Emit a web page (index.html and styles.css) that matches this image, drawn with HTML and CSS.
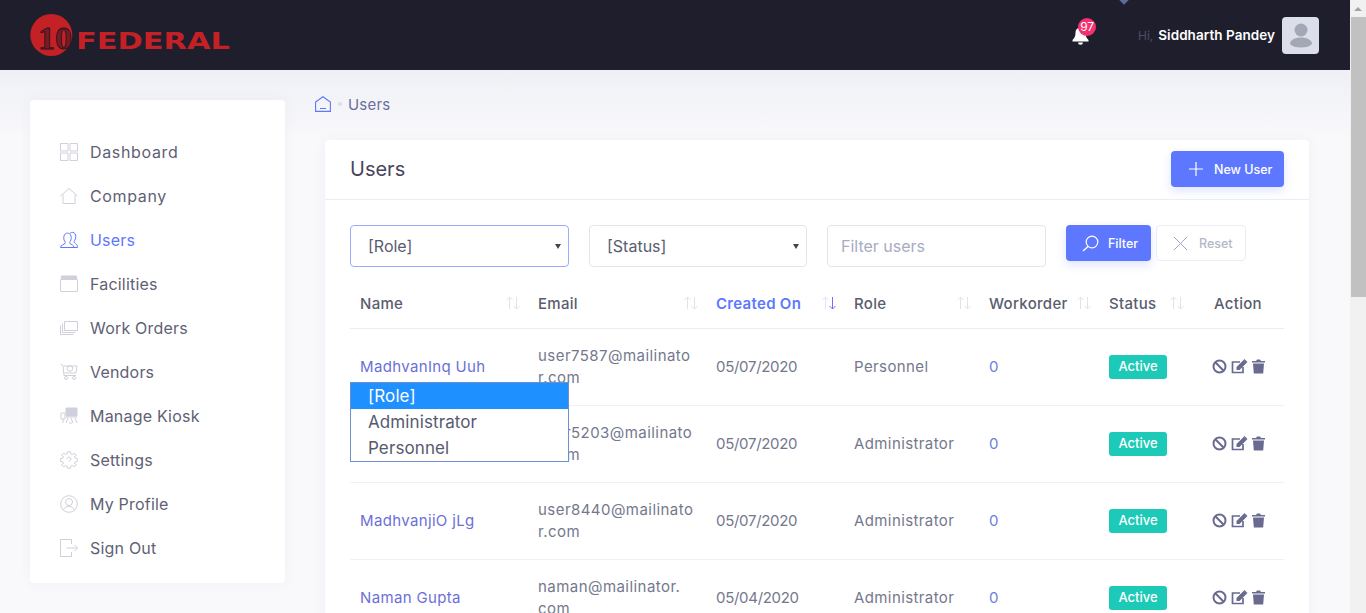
FILE: index.html
```html
<!DOCTYPE html>
<html lang="en">
<head>
    <meta charset="UTF-8">
    <title>Users</title>
    <link rel="stylesheet" href="styles.css">
</head>
<body>
    <header class="topbar">
        <svg class="logo" width="210" height="46" viewBox="0 0 210 46">
            <circle cx="21.3" cy="23" r="21" fill="#c42126"/>
            <text class="logo-num" x="8" y="37" textLength="34" lengthAdjust="spacingAndGlyphs">10</text>
            <text class="logo-name" x="46" y="37" textLength="154" lengthAdjust="spacingAndGlyphs">FEDERAL</text>
        </svg>
        <span class="top-marker"></span>
        <div class="notify">
            <svg width="17" height="18" viewBox="0 0 17 18"><path fill="#fff" d="M8.5.5c-3 0-5 2.400-5 5.300 0 3.500-1 5.200-3 7.200v1.500h16V13c-2-2-3-3.700-3-7.200 0-2.900-2-5.300-5-5.300zM6 15.500a2.500 2.200 0 0 0 5 0z"/></svg>
            <span class="badge">97</span>
        </div>
        <div class="user-info">
            <span class="hi">Hi,</span>
            <span class="uname">Siddharth Pandey</span>
            <span class="avatar">
                <svg width="24" height="26" viewBox="0 0 24 26"><circle cx="12" cy="8" r="6.5" fill="#a4a7b5"/><path fill="#a4a7b5" d="M1 22c0-4 5-6.500 11-6.500s11 2.500 11 6.500c-2 2.500-6 3.500-11 3.500s-9-1-11-3.500z"/></svg>
            </span>
        </div>
    </header>

    <div class="layout">
        <aside class="sidebar">
            <a class="nav-item wide"><svg width="18" height="18" viewBox="0 0 18 18"><path d="M.5.5H8V8H.5zM10 .5h7.500V8H10zM.5 10H8v7.500H.5zM10 10h7.500v7.500H10z"/></svg>Dashboard</a>
            <a class="nav-item wide"><svg width="18" height="18" viewBox="0 0 18 18"><path d="M.5 9 9 1.500 17.500 9M3 7.500v9h12v-9"/></svg>Company</a>
            <a class="nav-item active"><svg width="18" height="18" viewBox="0 0 18 18"><path d="M.5 16.500c0-2.500 3.500-3 4.500-4 .5-.8.300-1.500-.3-2.300C3.800 9 3.500 6.800 4 5c.5-2 1.800-2.800 3.500-2.800S10.500 3 11 5c.4 1.800.2 4-.7 5.200-.6.800-.8 1.500-.3 2.300 1 1 4 1.500 4 4zM10 2.500c.8-1 1.800-1.200 2.800-1.100 2 .2 3 2 3 4.100 0 1.700-.5 3.200-1.300 4.200-.5.700-.5 1.400 0 2 .7.800 3 1.200 3 4.800h-3.500"/></svg>Users</a>
            <a class="nav-item"><svg width="18" height="18" viewBox="0 0 18 18"><path d="M.5 4.500h17v12H.5z"/><path class="fill" d="M1.500 1h15v2.500h-15z"/></svg>Facilities</a>
            <a class="nav-item"><svg width="18" height="18" viewBox="0 0 18 18"><path d="M4.500 2.500h13v9h-13zM2.500 4.500v9h13M.5 6.500v9h13"/></svg>Work Orders</a>
            <a class="nav-item"><svg width="18" height="18" viewBox="0 0 18 18"><path d="M.5 1 3 2.500l1 10h12M4 3h13l-1 7H4.500"/><circle cx="10" cy="5.500" r="2.800"/><circle cx="6" cy="15" r="1.500"/><circle cx="14" cy="15" r="1.500"/></svg>Vendors</a>
            <a class="nav-item"><svg width="18" height="18" viewBox="0 0 18 18"><path class="fill" d="M6 1h11v8H6z"/><path d="M1 6h4v6H1zM6 10h11M3 12v4M8 11l-2 5M11 11l2 5M15 11l2 5M9 16h3"/></svg>Manage Kiosk</a>
            <a class="nav-item"><svg width="18" height="18" viewBox="0 0 18 18"><path d="M7.500.7h3l.4 2.200 1.500.6 1.900-1.300 2.100 2.100-1.900 1.300.6 1.500 2.200.4v3l-2.200.4-.6 1.500 1.900 1.300-2.100 2.100-1.900-1.300-1.500.6-.4 2.200h-3l-.4-2.200-1.500-.6-1.900 1.300-2.100-2.100 1.900-1.300-.6-1.500-2.200-.4v-3l2.200-.4.6-1.500-1.900-1.300 2.100-2.100 1.900 1.300 1.500-.6z"/><path d="M7 8c0-2.500 4-2.500 4 0 0 1.500-2 1.500-2 2.500"/></svg>Settings</a>
            <a class="nav-item"><svg width="18" height="18" viewBox="0 0 18 18"><circle cx="9" cy="9" r="8.3"/><circle cx="9" cy="7" r="3.5"/><path d="M3.500 15c1-2.500 3-3.500 5.500-3.500s4.500 1 5.500 3.500"/></svg>My Profile</a>
            <a class="nav-item"><svg width="18" height="18" viewBox="0 0 18 18"><path d="M11.500 5V.5H.5v17h11V13M6.500 9h11M14.500 6l3 3-3 3"/></svg>Sign Out</a>
        </aside>

        <main class="content">
            <div class="breadcrumb">
                <svg width="16" height="16" viewBox="0 0 16 16"><path fill="none" stroke="#5d78ff" stroke-width="1.1" d="M.6 6 8 .7 15.400 6v9.400H.6zM5 12.500h6"/></svg>
                <span class="crumb-dot"></span>
                <span>Users</span>
            </div>

            <section class="card">
                <div class="card-head">
                    <h1>Users</h1>
                    <button class="btn btn-primary btn-new">
                        <svg width="16" height="16" viewBox="0 0 16 16"><path stroke="#fff" stroke-width="1.2" d="M8 1v14M1 8h14"/></svg>New User
                    </button>
                </div>
                <div class="card-body">
                    <div class="filters">
                        <div class="select focused"><span>[Role]</span><i class="caret"></i></div>
                        <div class="select status-select"><span>[Status]</span><i class="caret"></i></div>
                        <div class="select placeholder"><span>Filter users</span></div>
                        <div class="filter-btns">
                            <button class="btn btn-primary btn-filter">
                                <svg width="17" height="17" viewBox="0 0 17 17"><circle cx="10" cy="7" r="5.8" fill="none" stroke="#fff" stroke-width="1.2"/><path stroke="#fff" stroke-width="1.4" d="M6 11.500 1 16"/></svg>Filter
                            </button>
                            <button class="btn btn-reset">
                                <svg width="15" height="15" viewBox="0 0 15 15"><path stroke="#a2a5b9" stroke-width="1" d="m1 1 13 13M14 1 1 14"/></svg>Reset
                            </button>
                        </div>
                    </div>

                    <table class="users">
                        <colgroup>
                            <col class="c-name"><col class="c-email"><col class="c-date"><col class="c-role"><col class="c-work"><col class="c-status"><col class="c-action">
                        </colgroup>
                        <thead>
                            <tr>
                                <th><div class="th-in">Name<svg class="sort" width="16" height="14" viewBox="0 0 16 14"><path d="M4.500 13V1M1.500 4l3-3 3 3M11.500 1v12M8.500 10l3 3 3-3"/></svg></div></th>
                                <th><div class="th-in">Email<svg class="sort" width="16" height="14" viewBox="0 0 16 14"><path d="M4.500 13V1M1.500 4l3-3 3 3M11.500 1v12M8.500 10l3 3 3-3"/></svg></div></th>
                                <th class="sorted"><div class="th-in">Created On<svg class="sort" width="16" height="14" viewBox="0 0 16 14"><path class="up" d="M4.500 13V1M1.500 4l3-3 3 3"/><path class="on" d="M11.500 1v12M8.500 10l3 3 3-3"/></svg></div></th>
                                <th><div class="th-in">Role<svg class="sort" width="16" height="14" viewBox="0 0 16 14"><path d="M4.500 13V1M1.500 4l3-3 3 3M11.500 1v12M8.500 10l3 3 3-3"/></svg></div></th>
                                <th><div class="th-in">Workorder<svg class="sort" width="16" height="14" viewBox="0 0 16 14"><path d="M4.500 13V1M1.500 4l3-3 3 3M11.500 1v12M8.500 10l3 3 3-3"/></svg></div></th>
                                <th><div class="th-in status-th">Status<svg class="sort" width="16" height="14" viewBox="0 0 16 14"><path d="M4.500 13V1M1.500 4l3-3 3 3M11.500 1v12M8.500 10l3 3 3-3"/></svg></div></th>
                                <th class="action-th">Action</th>
                            </tr>
                        </thead>
                        <tbody>
                            <tr>
                                <td class="name">MadhvanInq Uuh</td>
                                <td class="email">user7587@mailinator.com</td>
                                <td class="date">05/07/2020</td>
                                <td class="role">Personnel</td>
                                <td class="count">0</td>
                                <td><span class="status">Active</span></td>
                                <td><div class="actions">
                                    <svg width="15" height="15" viewBox="0 0 15 15"><circle cx="7.5" cy="7.5" r="6" fill="none" stroke="#686b8f" stroke-width="2"/><path stroke="#686b8f" stroke-width="2" d="m3.300 3.300 8.400 8.400"/></svg>
                                    <svg width="17" height="15" viewBox="0 0 17 15"><path fill="none" stroke="#686b8f" stroke-width="1.7" d="M9 3H1.500v10.500H12V8"/><path fill="#686b8f" d="m5.500 8 7-7 3 3-7 7H5.500zM13.500 0l3 3-.9.900-3-3z"/></svg>
                                    <svg width="13" height="15" viewBox="0 0 13 15"><path fill="#686b8f" d="M0 2h4l1-1.500h3L9 2h4v1.500H0zM1 4.500h11l-.8 10H1.800z"/></svg>
                                </div></td>
                            </tr>
                            <tr>
                                <td class="name">MadhvanVy Oke</td>
                                <td class="email">user5203@mailinator.com</td>
                                <td class="date">05/07/2020</td>
                                <td class="role">Administrator</td>
                                <td class="count">0</td>
                                <td><span class="status">Active</span></td>
                                <td><div class="actions">
                                    <svg width="15" height="15" viewBox="0 0 15 15"><circle cx="7.5" cy="7.5" r="6" fill="none" stroke="#686b8f" stroke-width="2"/><path stroke="#686b8f" stroke-width="2" d="m3.300 3.300 8.400 8.400"/></svg>
                                    <svg width="17" height="15" viewBox="0 0 17 15"><path fill="none" stroke="#686b8f" stroke-width="1.7" d="M9 3H1.500v10.500H12V8"/><path fill="#686b8f" d="m5.500 8 7-7 3 3-7 7H5.500zM13.500 0l3 3-.9.900-3-3z"/></svg>
                                    <svg width="13" height="15" viewBox="0 0 13 15"><path fill="#686b8f" d="M0 2h4l1-1.500h3L9 2h4v1.500H0zM1 4.500h11l-.8 10H1.800z"/></svg>
                                </div></td>
                            </tr>
                            <tr>
                                <td class="name">MadhvanjiO jLg</td>
                                <td class="email">user8440@mailinator.com</td>
                                <td class="date">05/07/2020</td>
                                <td class="role">Administrator</td>
                                <td class="count">0</td>
                                <td><span class="status">Active</span></td>
                                <td><div class="actions">
                                    <svg width="15" height="15" viewBox="0 0 15 15"><circle cx="7.5" cy="7.5" r="6" fill="none" stroke="#686b8f" stroke-width="2"/><path stroke="#686b8f" stroke-width="2" d="m3.300 3.300 8.400 8.400"/></svg>
                                    <svg width="17" height="15" viewBox="0 0 17 15"><path fill="none" stroke="#686b8f" stroke-width="1.7" d="M9 3H1.500v10.500H12V8"/><path fill="#686b8f" d="m5.500 8 7-7 3 3-7 7H5.500zM13.500 0l3 3-.9.900-3-3z"/></svg>
                                    <svg width="13" height="15" viewBox="0 0 13 15"><path fill="#686b8f" d="M0 2h4l1-1.500h3L9 2h4v1.500H0zM1 4.500h11l-.8 10H1.800z"/></svg>
                                </div></td>
                            </tr>
                            <tr>
                                <td class="name">Naman Gupta</td>
                                <td class="email">naman@mailinator.<br>com</td>
                                <td class="date">05/04/2020</td>
                                <td class="role">Administrator</td>
                                <td class="count">0</td>
                                <td><span class="status">Active</span></td>
                                <td><div class="actions">
                                    <svg width="15" height="15" viewBox="0 0 15 15"><circle cx="7.5" cy="7.5" r="6" fill="none" stroke="#686b8f" stroke-width="2"/><path stroke="#686b8f" stroke-width="2" d="m3.300 3.300 8.400 8.400"/></svg>
                                    <svg width="17" height="15" viewBox="0 0 17 15"><path fill="none" stroke="#686b8f" stroke-width="1.7" d="M9 3H1.500v10.500H12V8"/><path fill="#686b8f" d="m5.500 8 7-7 3 3-7 7H5.500zM13.500 0l3 3-.9.900-3-3z"/></svg>
                                    <svg width="13" height="15" viewBox="0 0 13 15"><path fill="#686b8f" d="M0 2h4l1-1.500h3L9 2h4v1.500H0zM1 4.500h11l-.8 10H1.800z"/></svg>
                                </div></td>
                            </tr>
                        </tbody>
                    </table>
                </div>
            </section>
        </main>
    </div>

    <ul class="role-menu">
        <li class="picked">[Role]</li>
        <li>Administrator</li>
        <li>Personnel</li>
    </ul>

    <div class="scrollbar">
        <span class="arrow"></span>
        <span class="thumb"></span>
    </div>
</body>
</html>
```

FILE: styles.css
```css
*{
    margin: 0;
    padding: 0;
    box-sizing: border-box;
}
html,body{
    height: 100%;
    overflow: hidden;
}
body{
    width: 1350px;
    background: #f9f9fc;
    font-family: Inter, "Open Sans", sans-serif;
    font-size: 15px;
    color: #74788d;
}
button{
    font-family: inherit;
    border: 0;
}

/* top bar */
.topbar{
    height: 70px;
    background: #1e1e2d;
    display: flex;
    align-items: center;
    padding: 0 31px 0 30px;
    position: relative;
}
.logo{
    display: block;
}
.logo-num{
    font-family: "Liberation Serif", serif;
    font-weight: bold;
    font-size: 32px;
    fill: #7a1a24;
    stroke: #25151f;
    stroke-width: .8;
}
.logo-name{
    font-family: "DejaVu Sans", sans-serif;
    font-weight: bold;
    font-size: 23.5px;
    fill: #c42126;
}
.top-marker{
    position: absolute;
    left: 1120px;
    top: -5px;
    width: 8px;
    height: 8px;
    background: #5f6a9c;
    transform: rotate(45deg);
}
.notify{
    margin-left: auto;
    position: relative;
    width: 17px;
    height: 18px;
    margin-top: 2px;
}
.notify svg{
    display: block;
}
.badge{
    position: absolute;
    left: 6px;
    top: -9px;
    width: 18px;
    height: 18px;
    border-radius: 50%;
    background: #f4306f;
    color: #fff;
    font-size: 12px;
    line-height: 18px;
    text-align: center;
    letter-spacing: -.3px;
}
.user-info{
    margin-left: 49px;
    display: flex;
    align-items: center;
}
.hi{
    font-size: 12px;
    color: #4d4d66;
    margin-right: 5px;
}
.uname{
    font-size: 13.5px;
    font-weight: 600;
    color: #fff;
    margin-right: 7px;
    letter-spacing: .05px;
}
.avatar{
    width: 37px;
    height: 37px;
    border-radius: 4px;
    background: #dcdfe9;
    display: flex;
    align-items: center;
    justify-content: center;
}

/* page */
.layout{
    display: flex;
    height: 543px;
    background: linear-gradient(#eff0f5, #f9f9fc 70px);
    padding-left: 30px;
}
.sidebar{
    width: 255px;
    height: 483px;
    margin-top: 30px;
    padding: 30px;
    background: #fff;
    border-radius: 4px;
    box-shadow: 0 0 13px rgba(82,63,105,.05);
    flex: none;
}
.nav-item{
    height: 44px;
    display: flex;
    align-items: center;
    gap: 12px;
    font-size: 16px;
    letter-spacing: .2px;
    color: #5f5f75;
}
.nav-item.wide{
    letter-spacing: .65px;
}
.nav-item svg{
    flex: none;
    fill: none;
    stroke: #cfd0db;
    stroke-width: 1;
}
.nav-item svg .fill{
    fill: #cfd0db;
}
.nav-item.active{
    color: #5d78ff;
}
.nav-item.active svg{
    stroke: #5d78ff;
}

.content{
    width: 994px;
    margin-left: 30px;
    padding-top: 23px;
}
.breadcrumb{
    height: 22px;
    margin-bottom: 25px;
    display: flex;
    align-items: center;
    font-size: 15px;
    letter-spacing: .2px;
    color: #6a6f9c;
}
.crumb-dot{
    width: 4px;
    height: 4px;
    border-radius: 50%;
    background: #dcdde8;
    margin: 0 6px 0 7px;
}
.card{
    margin-left: 10px;
    background: #fff;
    border-radius: 4px;
    box-shadow: 0 0 13px rgba(82,63,105,.05);
}
.card-head{
    height: 60px;
    padding: 0 25px 1px;
    border-bottom: 1px solid #ebedf2;
    display: flex;
    align-items: center;
    justify-content: space-between;
}
.card-head h1{
    font-size: 20px;
    font-weight: 400;
    color: #48465b;
}
.btn{
    height: 36px;
    border-radius: 4px;
    display: flex;
    align-items: center;
    font-size: 12.5px;
    font-weight: 500;
}
.btn-primary{
    background: #5d78ff;
    color: #fff;
    box-shadow: 0 4px 10px rgba(93,120,255,.2);
}
.btn-new{
    width: 113px;
    padding-left: 17px;
    gap: 10px;
}
.card-body{
    padding: 25px 25px 0;
}
.filters{
    display: flex;
    gap: 20px;
    margin-bottom: 12px;
}
.select{
    width: 219px;
    height: 42px;
    padding: 0 17px;
    border: 1px solid #e2e5ec;
    border-radius: 4px;
    display: flex;
    align-items: center;
    justify-content: space-between;
    font-size: 16px;
    color: #595d6e;
    position: relative;
}
.status-select{
    width: 218px;
}
.select.focused{
    border-color: #9aabff;
}
.select.placeholder{
    padding: 0 13px;
    color: #a7abc3;
}
.caret{
    width: 0;
    height: 0;
    margin-right: -10px;
    border-left: 3px solid transparent;
    border-right: 3px solid transparent;
    border-top: 5px solid #444;
}
.filter-btns{
    display: flex;
    gap: 5px;
}
.btn-filter{
    width: 85px;
    padding-left: 16px;
    gap: 9px;
}
.btn-reset{
    width: 90px;
    padding-left: 16px;
    gap: 11px;
    background: #fff;
    border: 1px solid #ebedf5;
    color: #b5b7c8;
}

/* table */
.users{
    width: 934px;
    border-collapse: collapse;
    table-layout: fixed;
}
.c-name,.c-email{ width: 178px; }
.c-date{ width: 138px; }
.c-role{ width: 135px; }
.c-work{ width: 120px; }
.c-status{ width: 100px; }
.c-action{ width: 85px; }
.users th{
    height: 49px;
    padding-left: 10px;
    text-align: left;
    font-size: 15px;
    font-weight: 500;
    letter-spacing: .3px;
    color: #595d6e;
    border-bottom: 1px solid #ebedf2;
}
.th-in{
    display: flex;
    align-items: center;
    justify-content: space-between;
    padding-right: 7px;
}
.th-in.status-th{
    padding-right: 14px;
}
.sort{
    fill: none;
    stroke: #e1e3ec;
    stroke-width: 1;
    flex: none;
}
.sort .up{
    stroke: #dfe3ff;
}
.sort .on{
    stroke: #7d6cf2;
}
.users th.sorted{
    color: #5d78ff;
    font-weight: 600;
}
.users th.action-th{
    padding-left: 15px;
}
.users td{
    height: 77px;
    padding: 0 10px;
    font-size: 15px;
    line-height: 22px;
    border-bottom: 1px solid #f0f0f8;
}
.users td.email{
    padding-right: 12px;
    word-break: break-all;
    letter-spacing: .45px;
}
.name{
    color: #6c6fd8;
    letter-spacing: .35px;
}
.date{
    letter-spacing: -.3px;
}
.role{
    letter-spacing: .4px;
}
.count{
    color: #6c7ee0;
}
.status{
    display: block;
    width: 58px;
    height: 24px;
    line-height: 23px;
    text-align: center;
    border-radius: 3px;
    background: #1dc9b7;
    color: #fff;
    font-size: 13px;
    font-weight: 500;
}
.actions{
    display: flex;
    align-items: center;
    gap: 4px;
    margin-left: 3px;
}
.actions svg{
    display: block;
    flex: none;
}

/* open dropdown of the role select */
.role-menu{
    position: absolute;
    left: 350px;
    top: 382px;
    width: 219px;
    height: 80px;
    background: #fff;
    border: 1px solid #6b8fd0;
    list-style: none;
    font-size: 17px;
    letter-spacing: .1px;
    color: #555a6e;
}
.role-menu li{
    height: 26px;
    line-height: 26px;
    padding-left: 17px;
}
.role-menu .picked{
    background: #1e90ff;
    color: #fff;
}

.scrollbar{
    position: fixed;
    left: 1350px;
    top: 0;
    width: 16px;
    height: 613px;
    background: #f1f1f1;
}
.arrow{
    position: absolute;
    left: 4px;
    top: 7px;
    border-left: 4px solid transparent;
    border-right: 4px solid transparent;
    border-bottom: 4px solid #a3a3a3;
}
.thumb{
    position: absolute;
    left: 1px;
    top: 17px;
    width: 15px;
    height: 280px;
    background: #c1c1c1;
}
```
